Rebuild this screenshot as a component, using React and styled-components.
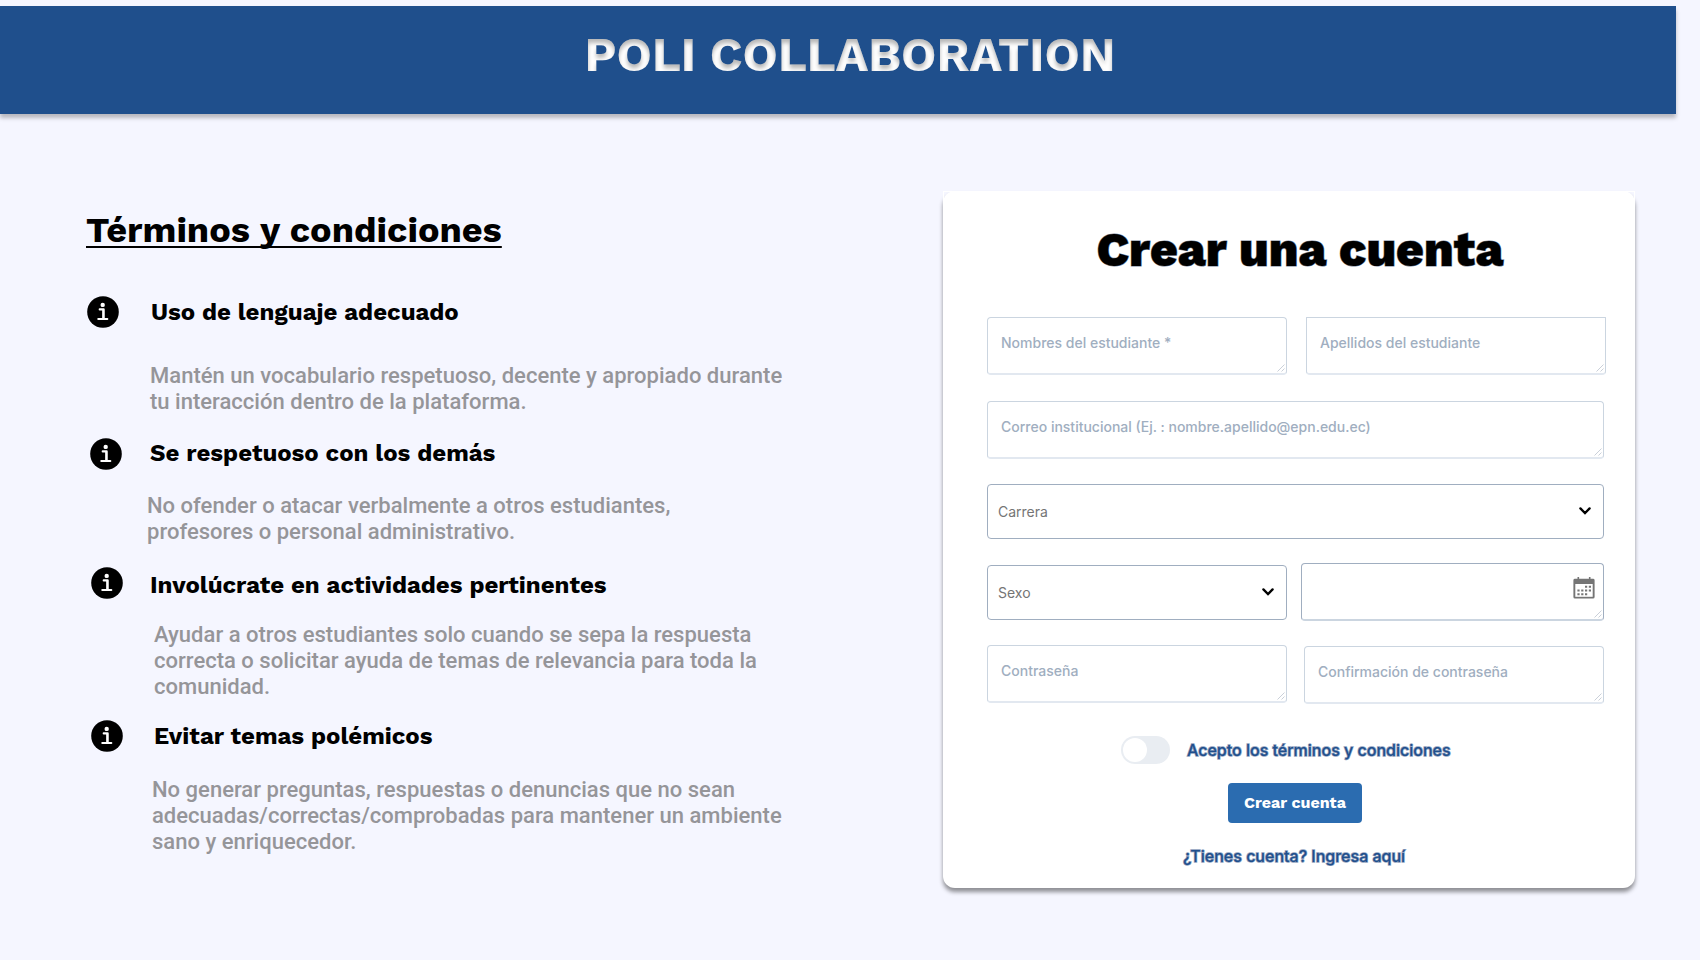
import React from "react";
import styled, { createGlobalStyle } from "styled-components";

const Global = createGlobalStyle`
  *, *::before, *::after { box-sizing: border-box; }
  body { margin: 0; background: #f5f6ff; font-family: Inter, "Liberation Sans", sans-serif; }
  h1, h2, h3, p { margin: 0; }
`;

const display = `"Work Sans", Inter, "Liberation Sans", sans-serif`;

const Page = styled.div`
  width: 1700px;
  height: 960px;
  padding-top: 6px;
  overflow: hidden;
`;

const Header = styled.header`
  width: 1676px;
  height: 108px;
  padding: 21px 0 0 584.5px;
  background: #1f4f8c;
  box-shadow: 0 4px 4px rgba(0, 0, 0, 0.25);
`;

const Brand = styled.h1`
  font: 700 48px/56px ${display};
  color: #fff;
  white-space: nowrap;
  filter: url(#inset-shade);
`;

const Main = styled.main`
  display: flex;
  align-items: flex-start;
`;

const Terms = styled.section`
  width: 943px;
  padding: 96px 0 0 86px;
`;

const TermsTitle = styled.h2`
  width: max-content;
  font: 700 36px/40px ${display};
  color: #000;
  text-decoration: underline;
  text-decoration-thickness: 2px;
  text-underline-offset: 4px;
  text-decoration-skip-ink: none;
  margin-bottom: 46px;
`;

const Rule = styled.article`
  margin-bottom: ${(p) => p.$after}px;
`;

const RuleHead = styled.div`
  display: flex;
  align-items: flex-start;
  padding: ${(p) => p.$iconTop}px 0 0 ${(p) => p.$iconLeft}px;

  svg {
    flex: none;
    width: 32px;
    height: 32px;
  }
`;

const RuleTitle = styled.h3`
  margin-left: ${(p) => p.$gap}px;
  margin-top: ${(p) => p.$drop}px;
  font: 700 24px/32px ${display};
  color: #000;
  white-space: nowrap;
`;

const RuleText = styled.p`
  margin: ${(p) => p.$gap}px 0 0 ${(p) => p.$indent}px;
  font: 500 22px/26px Roboto, "Liberation Sans", sans-serif;
  letter-spacing: 0.015px;
  color: #959599;
  white-space: pre-line;
`;

const Card = styled.section`
  position: relative;
  width: 692px;
  height: 697px;
  margin-top: 77px;
  padding: 35px 0 0 44px;
  background: #fff;
  border-radius: 12px;
  box-shadow: 0 4px 4px rgba(0, 0, 0, 0.42);

  &::before {
    content: "";
    position: absolute;
    inset: 0 0 auto 0;
    height: 12px;
    border: 1px solid #fff;
    border-bottom: 0;
  }
`;

const CardTitle = styled.h2`
  width: 626px;
  text-align: center;
  font: 800 48px/48px ${display};
  color: #000;
  -webkit-text-stroke: 1px #718096;
  paint-order: stroke fill;
  margin-bottom: 43px;
`;

const FieldRow = styled.div`
  display: flex;
  align-items: flex-start;
  gap: ${(p) => p.$gap || 0}px;
  margin-bottom: ${(p) => p.$after}px;
`;

const Field = styled.div`
  position: relative;
  flex: none;
  width: ${(p) => p.$w}px;
  height: 58px;
  margin-top: ${(p) => p.$drop || 0}px;
  padding: 15px 13px 0;
  border: 1px solid ${(p) => (p.$strong ? "#a0aec0" : "#cbd5e0")};
  border-bottom: 2px solid ${(p) => (p.$strong ? "#cbd5e0" : "#e2e8f0")};
  border-radius: ${(p) => (p.$square ? "1px 1px 4px 4px" : "4px")};
  background: #fff;
  font-size: 14px;
  font-weight: 500;
  line-height: 20px;
  color: #a0aec0;
`;

const Grip = styled.svg`
  position: absolute;
  right: 1px;
  bottom: 1px;
  width: 8px;
  height: 8px;
`;

const DateIcon = styled.svg`
  display: block;
  width: 22px;
  height: 22px;
  margin: -2px -5px 0 auto;
`;

const SelectBox = styled.div`
  flex: none;
  display: flex;
  justify-content: space-between;
  width: ${(p) => p.$w}px;
  height: 55px;
  margin-top: ${(p) => p.$drop || 0}px;
  padding: 17px 11px 0 10px;
  border: 1px solid #a0aec0;
  border-radius: 4px;
  background: #fff;
  font-size: 14px;
  line-height: 20px;
  color: #757575;

  svg {
    width: 14px;
    height: 10px;
    margin-top: 4px;
  }
`;

const Consent = styled.div`
  display: flex;
  align-items: center;
  margin-left: 134px;
  height: 28px;
`;

const Toggle = styled.span`
  width: 49px;
  height: 28px;
  padding: 2px;
  border-radius: 14px;
  background: #e9edf2;

  &::before {
    content: "";
    display: block;
    width: 24px;
    height: 24px;
    border-radius: 50%;
    background: #fff;
  }
`;

const Accent = styled.span`
  margin: ${(p) => p.$m};
  font-weight: 500;
  font-size: 16px;
  line-height: 28px;
  color: #1f4f8c;
  -webkit-text-stroke: 1.4px #8ea0bd;
  paint-order: stroke fill;
  white-space: nowrap;
`;

const Submit = styled.button`
  display: block;
  width: 134px;
  height: 40px;
  margin: 19px 0 0 241px;
  padding: 0;
  border: 0;
  border-radius: 4px;
  background: #2b6cb0;
  color: #fff;
  font: 700 16px/40px ${display};
`;

const InfoIcon = () => (
  <svg viewBox="0 0 32 32">
    <circle cx="16" cy="16" r="15.8" fill="#000" />
    <circle cx="15.700" cy="8.900" r="2.200" fill="#fff" />
    <path
      d="M12.700 13.400h4v8.600M11.300 23h9M16.200 14v8.500"
      fill="none"
      stroke="#fff"
      strokeWidth="2.1"
      strokeLinecap="round"
      strokeLinejoin="round"
    />
  </svg>
);

const ResizeGrip = () => (
  <Grip viewBox="0 0 8 8">
    <path d="M0.5 7.5l7-7M4.5 7.5l3-3" stroke="#bcc4cf" strokeWidth="0.8" fill="none" />
  </Grip>
);

const Chevron = () => (
  <svg viewBox="0 0 14 10">
    <path d="M2.4 2.4L7 7l4.6-4.6" fill="none" stroke="#000" strokeWidth="2.3" strokeLinecap="round" />
  </svg>
);

const Calendar = () => (
  <DateIcon viewBox="0 0 22 22">
    <path d="M4.5 0h1.6v1.800h9.800V0h1.600v1.800H20q1.600 0 1.600 1.400v16.800q0 1.600-1.600 1.600H2q-1.600 0-1.600-1.600V3.200q0-1.400 1.600-1.400h2.500z" fill="#757575" />
    <path d="M2.300 7h17.400v12.800H2.300z" fill="#fff" />
    <path
      d="M12 8.700h2.200v2H12zM15.800 8.700H18v2h-2.200zM4.400 12.500h2.200v2H4.400zM8.200 12.500h2.200v2H8.200zM12 12.500h2.200v2H12zM15.800 12.500H18v2h-2.200zM4.400 16.300h2.200v2H4.400zM8.200 16.300h2.200v2H8.200zM12 16.300h2.200v2H12z"
      fill="#757575"
    />
  </DateIcon>
);

const rules = [
  {
    title: "Uso de lenguaje adecuado",
    text: "Mantén un vocabulario respetuoso, decente y apropiado durante\ntu interacción dentro de la plataforma.",
    iconLeft: 1, iconTop: 0, gap: 32, drop: 0, indent: 64, textGap: 35, after: 22,
  },
  {
    title: "Se respetuoso con los demás",
    text: "No ofender o atacar verbalmente a otros estudiantes,\nprofesores o personal administrativo.",
    iconLeft: 4, iconTop: 1, gap: 28, drop: -1, indent: 61, textGap: 22.5, after: 22.5,
  },
  {
    title: "Involúcrate en actividades pertinentes",
    text: "Ayudar a otros estudiantes solo cuando se sepa la respuesta\ncorrecta o solicitar ayuda de temas de relevancia para toda la\ncomunidad.",
    iconLeft: 5, iconTop: 0, gap: 27, drop: 2, indent: 68, textGap: 20.5, after: 20.5,
  },
  {
    title: "Evitar temas polémicos",
    text: "No generar preguntas, respuestas o denuncias que no sean\nadecuadas/correctas/comprobadas para mantener un ambiente\nsano y enriquecedor.",
    iconLeft: 5, iconTop: 0, gap: 31, drop: 0, indent: 66, textGap: 24.5, after: 0,
  },
];

export default function App() {
  return (
    <Page>
      <Global />
      <svg width="0" height="0" style={{ position: "absolute" }} aria-hidden="true">
        <filter id="inset-shade" x="0" y="0" width="1" height="1" colorInterpolationFilters="sRGB">
          <feOffset in="SourceAlpha" dy="4" result="moved" />
          <feGaussianBlur in="moved" stdDeviation="2" result="soft" />
          <feComposite in="SourceAlpha" in2="soft" operator="out" result="edge" />
          <feColorMatrix in="edge" values="0 0 0 0 0  0 0 0 0 0  0 0 0 0 0  0 0 0 0.28 0" result="shade" />
          <feMerge>
            <feMergeNode in="SourceGraphic" />
            <feMergeNode in="shade" />
          </feMerge>
        </filter>
      </svg>
      <Header>
        <Brand>POLI COLLABORATION</Brand>
      </Header>
      <Main>
        <Terms>
          <TermsTitle>Términos y condiciones</TermsTitle>
          {rules.map((r) => (
            <Rule key={r.title} $after={r.after}>
              <RuleHead $iconLeft={r.iconLeft} $iconTop={r.iconTop}>
                <InfoIcon />
                <RuleTitle $gap={r.gap} $drop={r.drop}>{r.title}</RuleTitle>
              </RuleHead>
              <RuleText $gap={r.textGap} $indent={r.indent}>{r.text}</RuleText>
            </Rule>
          ))}
        </Terms>
        <Card>
          <CardTitle>Crear una cuenta</CardTitle>
          <FieldRow $gap={19} $after={26}>
            <Field $w={300}>Nombres del estudiante *<ResizeGrip /></Field>
            <Field $w={300} $square>Apellidos del estudiante<ResizeGrip /></Field>
          </FieldRow>
          <FieldRow $after={25}>
            <Field $w={617}>Correo institucional (Ej. : nombre.apellido@epn.edu.ec)<ResizeGrip /></Field>
          </FieldRow>
          <FieldRow $after={24}>
            <SelectBox $w={617}>Carrera<Chevron /></SelectBox>
          </FieldRow>
          <FieldRow $gap={14} $after={24}>
            <SelectBox $w={300} $drop={2}>Sexo<Chevron /></SelectBox>
            <Field $w={303} $strong><Calendar /><ResizeGrip /></Field>
          </FieldRow>
          <FieldRow $gap={17} $after={32}>
            <Field $w={300}>Contraseña<ResizeGrip /></Field>
            <Field $w={300} $drop={1}>Confirmación de contraseña<ResizeGrip /></Field>
          </FieldRow>
          <Consent>
            <Toggle />
            <Accent $m="0 0 0 17px">Acepto los términos y condiciones</Accent>
          </Consent>
          <Submit>Crear cuenta</Submit>
          <Accent as="div" $m="19px 0 0 196px">¿Tienes cuenta? Ingresa aquí</Accent>
        </Card>
      </Main>
    </Page>
  );
}
